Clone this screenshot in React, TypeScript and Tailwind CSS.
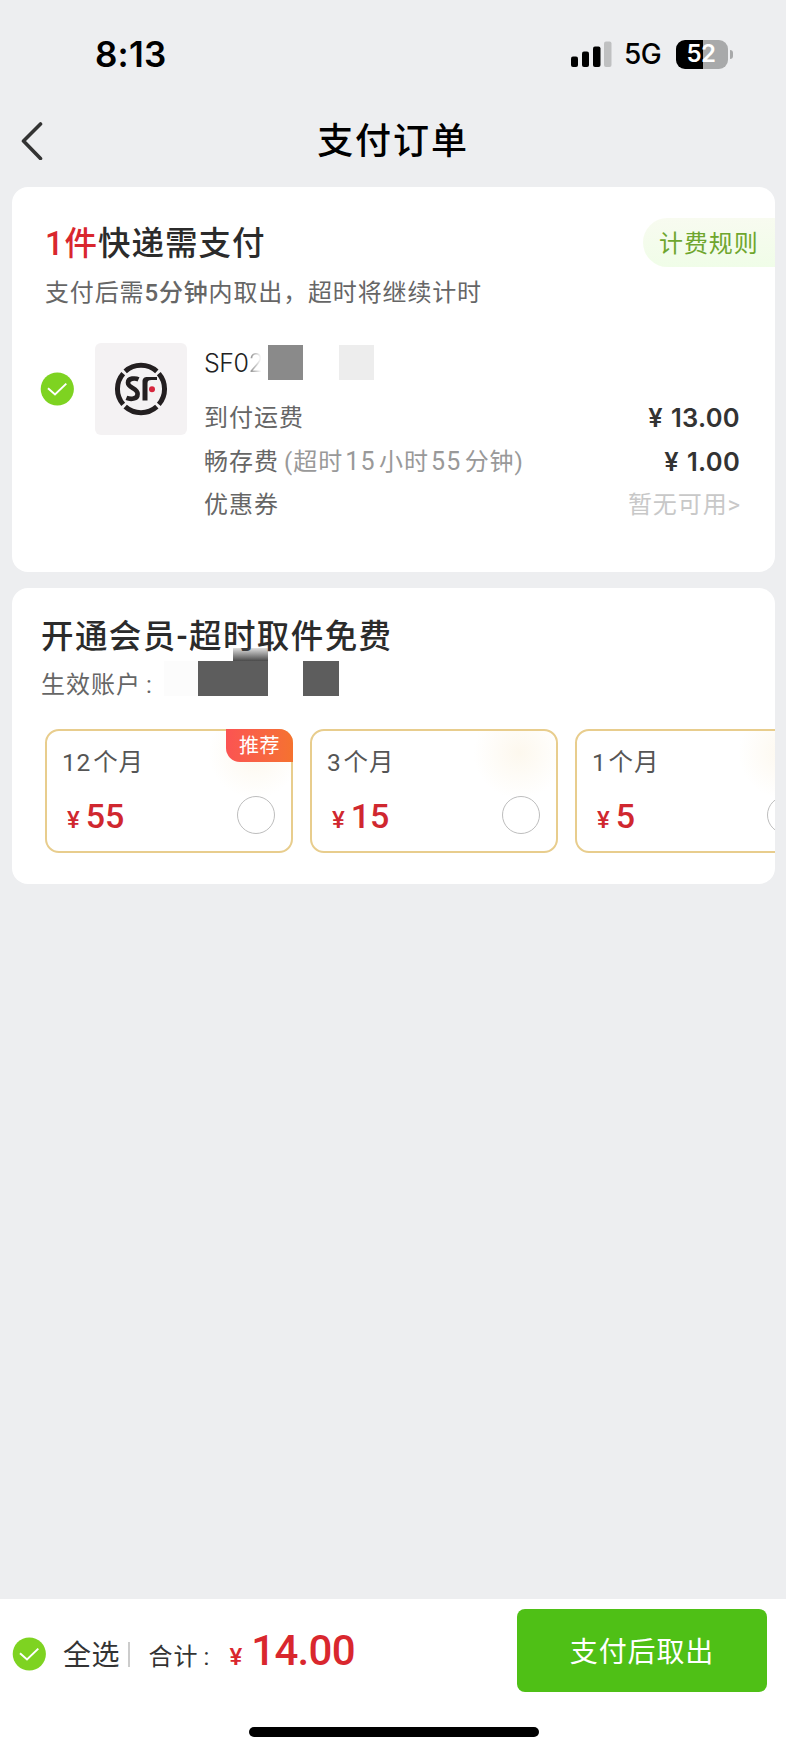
import type { ReactNode } from "react";

type Plan = {
  months: number;
  price: number;
  recommended?: boolean;
};

const plans: Plan[] = [
  { months: 12, price: 55, recommended: true },
  { months: 3, price: 15 },
  { months: 1, price: 5 },
];

const CheckCircle = () => (
  <svg className="size-[34px] shrink-0" viewBox="0 0 34 34" fill="none">
    <circle cx="17.3" cy="17" r="16.6" fill="#7ed321" />
    <path d="M8 16.3 15 22.4 26.3 11.6" stroke="#fff" strokeWidth="2" />
  </svg>
);

const StatusBar = () => (
  <div className="flex h-[108px] items-center justify-between pr-[53px] pl-[95px] font-['Inter',sans-serif] text-black">
    <span className="text-[35px] leading-none font-semibold tracking-[0.2px]">8:13</span>
    <div className="flex items-center">
      <svg className="h-[26px] w-[41px]" viewBox="0 0 41 26">
        <rect x="0" y="15.5" width="7" height="10.5" rx="2" />
        <rect x="11" y="10.5" width="7" height="15.5" rx="2" />
        <rect x="22" y="5.5" width="7.5" height="20.5" rx="2" />
        <rect x="33" y="0.5" width="7.5" height="25.5" rx="2" fill="#bfc0c1" />
      </svg>
      <span className="ml-[12px] w-[39px] text-[28px] leading-none font-medium tracking-[-0.5px]">5G</span>
      <div className="ml-[13px] flex h-[29px] w-[52px] items-center justify-center rounded-[9px] bg-linear-to-r from-black from-[52%] to-[#a8a9aa] to-[52%] pr-[2px] text-[24px] leading-none font-semibold tracking-[-0.5px] text-white">
        52
      </div>
      <div className="ml-[2px] h-[9px] w-[3px] rounded-r-full bg-[#a8a9aa]" />
    </div>
  </div>
);

const Header = () => (
  <header className="grid h-[79px] grid-cols-[60px_1fr_60px] items-center pb-[14px]">
    <svg className="ml-[20px] h-[38px] w-[24px]" viewBox="0 0 24 38" fill="none">
      <path d="M20.5 2 3.5 19l17 17.5" stroke="#333" strokeWidth="3.6" strokeLinecap="round" strokeLinejoin="round" />
    </svg>
    <h1 className="pt-[2px] text-center text-[36px] leading-[40px] font-medium tracking-[1.9px] text-black">支付订单</h1>
  </header>
);

const SfLogo = () => (
  <div className="flex size-[92px] shrink-0 items-center justify-center rounded-[6px] bg-[#f4f2f3]">
    <svg className="size-[54px]" viewBox="0 0 54 54" fill="none">
      <g stroke="#231f20" strokeWidth="5">
        <path d="M11.2 9.4a23.5 23.5 0 0 1 31.600 0" />
        <path d="M44.800 11.600a23.500 23.500 0 0 1 0 30.800" />
        <path d="M42.800 44.600a23.500 23.500 0 0 1-31.600 0" />
        <path d="M9.200 42.400a23.500 23.500 0 0 1 0-30.800" />
      </g>
      <path
        d="M24.500 17.300c-2.800-1.300-10.500-1.600-10.500 3.400 0 5.400 9.600 5.200 9.600 11.200 0 5.600-7.200 5.600-11.200 4"
        stroke="#231f20"
        strokeWidth="4.6"
      />
      <path d="M28.500 38.500V19.500c0-3.300 1.800-4.500 5-4.500H43v3h-5.500c-3 0-4 .8-4 3.500v17Z" fill="#231f20" />
      <circle cx="38" cy="27.300" r="3" fill="#d7263d" />
    </svg>
  </div>
);

const Num = ({ children }: { children: ReactNode }) => (
  <span className="mr-[3px] ml-[2px] text-[25px] tracking-[1.3px]">{children}</span>
);

const FeeRow = ({ label, children }: { label: ReactNode; children: ReactNode }) => (
  <div className="flex h-[43.5px] items-center justify-between text-[24px] leading-none">
    <div className="tracking-[1px] whitespace-nowrap text-[#666]">{label}</div>
    {children}
  </div>
);

const Amount = ({ value }: { value: string }) => (
  <span className="font-['Inter',sans-serif] text-[25.5px] font-semibold tracking-[0.3px] text-[#333]">
    <span className="mr-[8px]">¥</span>
    {value}
  </span>
);

const ParcelCard = () => (
  <section className="h-[385px] rounded-[16px] bg-white pt-[31px]">
    <div className="flex h-[49px] items-center justify-between pl-[33px]">
      <h2 className="pt-[4px] text-[32.5px] leading-none font-medium tracking-[1px] text-[#2b2b2b]">
        <span className="text-[#d9272e]">1件</span>快递需支付
      </h2>
      <button className="h-full w-[132px] rounded-l-full bg-linear-to-b from-[#f8fbf0] to-[#f0fde8] pt-[3px] pl-[16px] text-left text-[24px] leading-none tracking-[0.9px] text-[#6fa62e]">
        计费规则
      </button>
    </div>
    <p className="mt-[13px] pl-[33px] text-[24px] leading-[26px] tracking-[0.85px] text-[#666]">
      支付后需<span className="font-medium text-[#666]">5分钟</span>内取出，超时将继续计时
    </p>
    <div className="mt-[37px] flex pr-[35px] pl-[28px]">
      <div className="flex h-[92px] items-center gap-[21px]">
        <CheckCircle />
        <SfLogo />
      </div>
      <div className="ml-[17px] flex-1">
        <div className="flex h-[53px] items-start pt-[2px]">
          <div className="flex h-[37px] w-[64px] items-center overflow-hidden font-['Inter',sans-serif] text-[25px] font-light tracking-[-0.5px] text-[#222]">
            SF0
            <span className="bg-linear-to-r from-[#999] from-20% to-white to-90% bg-clip-text text-transparent">2</span>
          </div>
          <div className="size-[35px] bg-[#8a8a8a]" />
          <div className="ml-[36px] size-[35px] bg-[#ededed]" />
        </div>
        <FeeRow label="到付运费">
          <Amount value="13.00" />
        </FeeRow>
        <FeeRow
          label={
            <>
              畅存费<span className="ml-[5px] text-[#999]">(超时<Num>15</Num>小时<Num>55</Num>分钟)</span>
            </>
          }
        >
          <Amount value="1.00" />
        </FeeRow>
        <FeeRow label="优惠券">
          <span className="-mr-[1px] tracking-[0.9px] text-[#c8c8c8]">暂无可用&gt;</span>
        </FeeRow>
      </div>
    </div>
  </section>
);

const PlanOption = ({ months, price, recommended }: Plan) => (
  <div className="relative h-[124px] w-[248px] shrink-0 rounded-[14px] border-2 border-[#e8cd8d] bg-[radial-gradient(circle_at_85%_18%,#fdf8ee_0%,#ffffff_20%)] pt-[19px] pr-[16px] pl-[15px]">
    {recommended && (
      <div className="absolute -top-[2px] -right-[2px] flex h-[33px] w-[67px] items-center justify-center rounded-tr-[14px] rounded-bl-[14px] bg-linear-to-r from-[#fb5352] to-[#f5722f] pt-[1px] text-[20px] leading-none tracking-[0.5px] text-white">
        推荐
      </div>
    )}
    <div className="text-[24.5px] leading-[26px] tracking-[0.8px] text-[#555]">
      {months}
      <span className="ml-[2px]">个月</span>
    </div>
    <div className="mt-[18px] flex items-start justify-between">
      <div className="pt-[4px] pl-[5px] leading-[37px] font-medium text-[#d0272f]">
        <span className="mr-[6px] text-[24px]">¥</span>
        <span className="text-[34px]">{price}</span>
      </div>
      <div className="mt-[2px] size-[38px] rounded-full border-[1.5px] border-[#bdbdbd] bg-white" />
    </div>
  </div>
);

const MembershipCard = () => (
  <section className="mt-[16px] h-[296px] overflow-hidden rounded-[16px] bg-white pt-[31px]">
    <h2 className="pl-[29px] text-[32.5px] leading-[36px] font-medium tracking-[1.4px] text-[#2b2b2b]">
      开通会员-超时取件免费
    </h2>
    <div className="mt-[6px] flex h-[36px] items-start pl-[29px]">
      <span className="mt-[11px] w-[123px] text-[24px] leading-[26px] tracking-[1px] whitespace-nowrap text-[#666]">
        生效账户<span className="ml-[5px]">:</span>
      </span>
      <div className="h-[35px] w-[34px] bg-[#fcfcfc]" />
      <div className="relative h-[35px] w-[70px] bg-[#5d5d5d]">
        <div className="absolute right-0 bottom-full h-[13px] w-[35px] bg-linear-to-b from-[#5d5d5d]/20 to-[#4a4a4a]" />
      </div>
      <div className="ml-[35px] h-[35px] w-[36px] bg-[#5d5d5d]" />
    </div>
    <div className="mt-[32px] flex gap-[17px] pl-[33px]">
      {plans.map((plan) => (
        <PlanOption key={plan.months} {...plan} />
      ))}
    </div>
  </section>
);

const Footer = () => (
  <footer className="flex h-[154px] flex-col items-center bg-white">
    <div className="flex w-full items-center pt-[10px] pr-[19px] pl-[12px] leading-none text-[#333]">
      <div className="mt-[7px] flex flex-1 items-center">
        <CheckCircle />
        <span className="ml-[17px] pt-[4px] text-[28px] tracking-[0.5px]">全选</span>
        <div className="ml-[8px] h-[25px] w-[1.5px] bg-[#ccc]" />
        <span className="ml-[19px] w-[81px] pt-[6px] text-[24px] tracking-[1px] whitespace-nowrap">
          合计<span className="ml-[5px]">:</span>
        </span>
        <div className="pb-[6px] font-medium text-[#d9272e]">
          <span className="mr-[9px] text-[24px]">¥</span>
          <span className="text-[42px] tracking-[-0.7px]">14.00</span>
        </div>
      </div>
      <button className="h-[83px] w-[250px] rounded-[8px] bg-[#4fc016] pt-[5px] text-[28px] tracking-[0.9px] text-white">
        支付后取出
      </button>
    </div>
    <div className="mt-[35px] ml-[2px] h-[10px] w-[290px] rounded-full bg-black" />
  </footer>
);

export default function App() {
  return (
    <div className="flex h-[1753px] w-[786px] flex-col overflow-hidden bg-[#edeef0] font-['Roboto','Noto_Sans_CJK_SC',sans-serif]">
      <StatusBar />
      <Header />
      <main className="flex-1 pr-[11px] pl-[12px]">
        <ParcelCard />
        <MembershipCard />
      </main>
      <Footer />
    </div>
  );
}
